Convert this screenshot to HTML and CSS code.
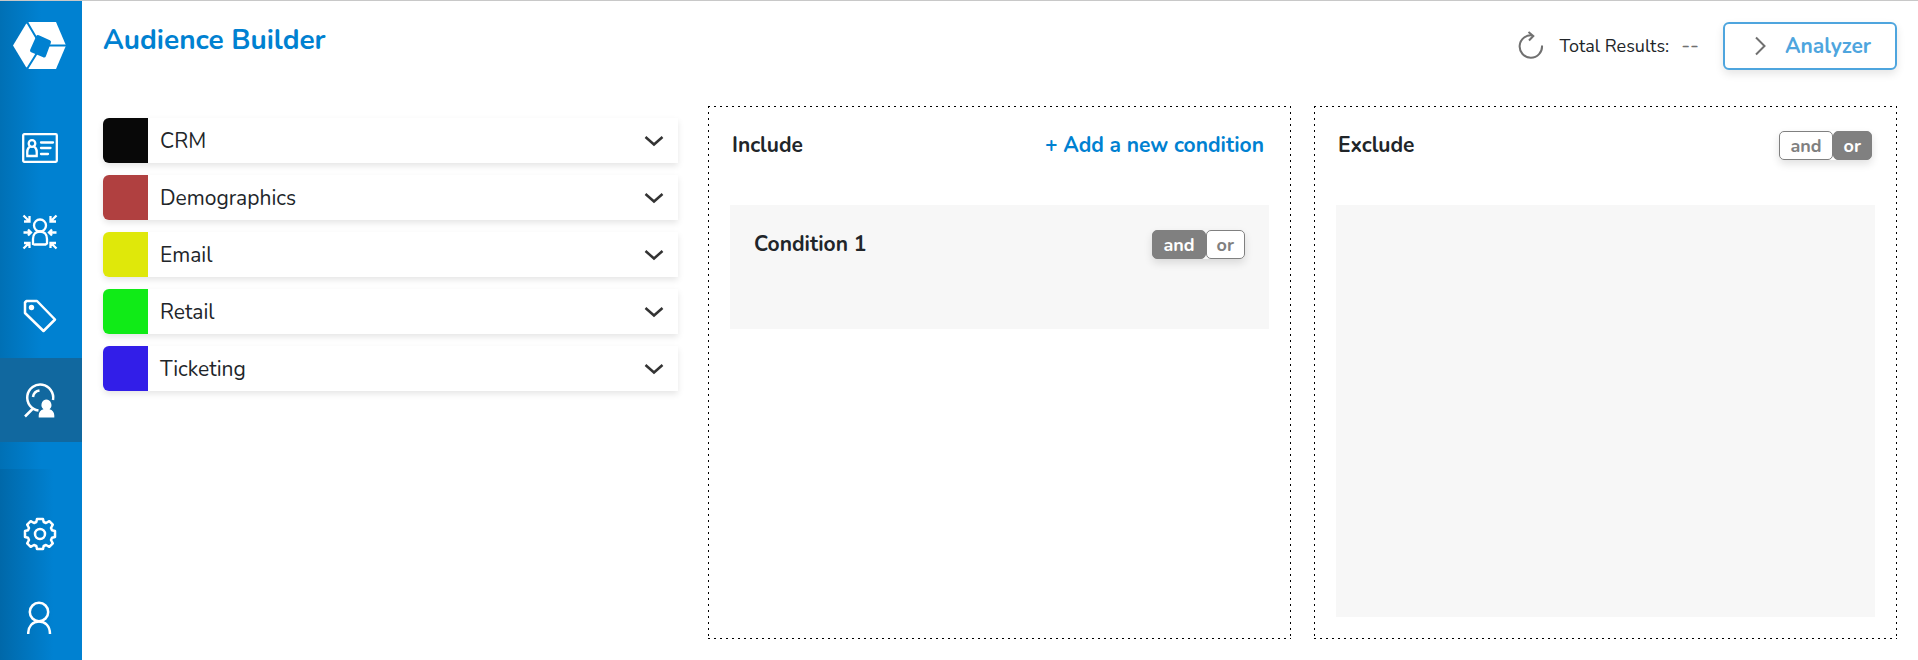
FILE: index.html
```
<!DOCTYPE html>
<html lang="en">
  <head>
    <meta charset="utf-8">
    <title>Audience Builder</title>
    <link rel="stylesheet" href="styles.css">
  </head>
  <body>
    <nav class="sidebar">
      <a class="logo" href="#" aria-label="Home">
        <svg width="54" height="50" viewBox="0 0 54 50">
          <path fill="#fff" d="M13 3l3-2h27l10 23.500L43 48H16l-3-2L0 24.500z"/>
          <path fill="none" stroke="#0081d1" stroke-width="2" d="M14 1l10 17M54 24.500H35M14 48l10-16"/>
          <path fill="#0081d1" stroke="#0081d1" stroke-width="4" stroke-linejoin="round" d="M25 16l11 5-5 13.500-12-5z"/>
        </svg>
      </a>
      <div class="nav-top">
        <a class="nav-item" href="#" aria-label="Contacts">
          <svg width="36" height="30" viewBox="0 0 36 30" fill="none" stroke="#fff" stroke-width="2.300" stroke-linecap="round">
            <rect x="1.200" y="1.200" width="33.600" height="27.600" rx="1"/>
            <circle cx="10" cy="10.500" r="3.300"/>
            <path d="M7.500 14C5 15.500 5 18 5.300 23h9.400c.3-5 .3-7.500-2.200-9M19 9.500h12M19 15h9.500M19 21h7"/>
          </svg>
        </a>
        <a class="nav-item" href="#" aria-label="Segments">
          <svg width="36" height="36" viewBox="0 0 36 36" fill="none" stroke="#fff" stroke-width="2.300">
            <circle cx="18" cy="11.500" r="6"/>
            <path d="M11 30v-5c0-5 3-7.500 7-7.500s7 2.500 7 7.500v4.500l-1.500 1h-11z"/>
            <path d="M1.500 18.500H9M6 15.500l3 3-3 3M34.500 18.500H27M30 15.500l-3 3 3 3M1.500 1.500L7 7M7.500 2v5.500H2M34.500 1.500L29 7M28.500 2v5.500H34M1.500 34.500L7 29M2 29h5.500v5M34.500 34.500L29 29M34 29h-5.500v5"/>
          </svg>
        </a>
        <a class="nav-item" href="#" aria-label="Tags">
          <svg width="34" height="34" viewBox="0 0 34 34" fill="none" stroke="#fff" stroke-width="2.500" stroke-linejoin="round">
            <path d="M2 3.500L3.500 2H14L32 20.500 20.500 32 2 14z"/>
            <circle cx="8.500" cy="8.500" r="2.700" fill="#fff" stroke="none"/>
          </svg>
        </a>
        <a class="nav-item active" href="#" aria-label="Audience Builder">
          <svg width="34" height="36" viewBox="0 0 34 36" fill="none" stroke="#fff" stroke-width="2.500">
            <path d="M15.500 28.500A13 13 0 1 1 30 18M10 15c.5-3.500 3-6 6.500-6.500M9.500 27L2 34.500"/>
            <path fill="#fff" stroke="none" d="M23 17.500a5.500 5.500 0 0 1 3.500 9.700c3 .8 4.800 3 4.800 6.300v2H15.700v-2c0-3.300 1.800-5.500 4.800-6.300A5.500 5.500 0 0 1 23 17.500z"/>
          </svg>
        </a>
      </div>
      <div class="nav-bottom">
        <a class="nav-item" href="#" aria-label="Settings">
          <svg width="34" height="34" viewBox="0 0 34 34" fill="none" stroke="#fff" stroke-width="2.500" stroke-linejoin="round">
            <path d="M13.300 5L14 2h6l.7 3 2.300 1 3.300-1.800 3.500 3.500L28 11l1 2.300 3 .7v6l-3 .7-1 2.300 1.800 3.300-3.500 3.500L23 28l-2.300 1-.7 3h-6l-.7-3-2.300-1-3.300 1.800-3.500-3.500L6 23l-1-2.300-3-.7v-6l3-.7L6 11 4.200 7.700l3.500-3.500L11 6z"/>
            <circle cx="17" cy="17" r="5"/>
          </svg>
        </a>
        <a class="nav-item" href="#" aria-label="Profile">
          <svg width="26" height="34" viewBox="0 0 26 34" fill="none" stroke="#fff" stroke-width="2.500">
            <circle cx="12" cy="11" r="9.200"/>
            <path d="M1.200 33c0-8 4.500-12.500 10.800-12.500S23 25 23 33"/>
          </svg>
        </a>
      </div>
    </nav>

    <main class="main">
      <header class="header">
        <h1 class="title">Audience Builder</h1>
        <div class="results">
          <button class="refresh" type="button" aria-label="Refresh">
            <svg width="26" height="30" viewBox="0 0 26 30" fill="none" stroke="#707070" stroke-width="2">
              <path d="M24 14.500a11.200 11.200 0 1 1-9-10M10.500 1l4.800 4-4.300 4.500"/>
            </svg>
          </button>
          <span class="total">Total Results:</span>
          <span class="count">--</span>
          <button class="analyzer" type="button">
            <svg width="12" height="20" viewBox="0 0 12 20" fill="none" stroke="#707070" stroke-width="2">
              <path d="M1 1.500L9.500 10 1 18.500"/>
            </svg>
            Analyzer
          </button>
        </div>
      </header>

      <div class="columns">
        <div class="categories">
          <button class="category" type="button">
            <span class="swatch crm"></span>
            <span class="name">CRM</span>
            <svg class="chevron" width="20" height="12" viewBox="0 0 20 12"><path d="M1.500 2l8.500 7.500L18.500 2"/></svg>
          </button>
          <button class="category" type="button">
            <span class="swatch demographics"></span>
            <span class="name">Demographics</span>
            <svg class="chevron" width="20" height="12" viewBox="0 0 20 12"><path d="M1.500 2l8.500 7.500L18.500 2"/></svg>
          </button>
          <button class="category" type="button">
            <span class="swatch email"></span>
            <span class="name">Email</span>
            <svg class="chevron" width="20" height="12" viewBox="0 0 20 12"><path d="M1.500 2l8.500 7.500L18.500 2"/></svg>
          </button>
          <button class="category" type="button">
            <span class="swatch retail"></span>
            <span class="name">Retail</span>
            <svg class="chevron" width="20" height="12" viewBox="0 0 20 12"><path d="M1.500 2l8.500 7.500L18.500 2"/></svg>
          </button>
          <button class="category" type="button">
            <span class="swatch ticketing"></span>
            <span class="name">Ticketing</span>
            <svg class="chevron" width="20" height="12" viewBox="0 0 20 12"><path d="M1.500 2l8.500 7.500L18.500 2"/></svg>
          </button>
        </div>

        <section class="panel">
          <div class="panel-header">
            <h2 class="heading">Include</h2>
            <button class="add" type="button">+ Add a new condition</button>
          </div>
          <div class="condition">
            <h3 class="heading">Condition 1</h3>
            <div class="toggle">
              <button class="option selected" type="button">and</button>
              <button class="option" type="button">or</button>
            </div>
          </div>
        </section>

        <section class="panel">
          <div class="panel-header">
            <h2 class="heading">Exclude</h2>
            <div class="toggle">
              <button class="option" type="button">and</button>
              <button class="option selected" type="button">or</button>
            </div>
          </div>
          <div class="dropzone"></div>
        </section>
      </div>
    </main>
  </body>
</html>
```
FILE: styles.css
```
* {
  box-sizing: border-box;
}
body {
  margin: 0;
  min-height: 100vh;
  display: flex;
  border-top: 1px solid #c8c8c8;
  font-family: Nunito, Lato, sans-serif;
  font-size: 21px;
  color: #212529;
}
button {
  font: inherit;
  color: inherit;
  background: none;
  border: 0;
  padding: 0;
  cursor: pointer;
}
svg {
  display: block;
}
h1, h2, h3 {
  margin: 0;
}

/* sidebar */
.sidebar {
  width: 82px;
  flex: none;
  display: flex;
  flex-direction: column;
  background: linear-gradient(to right, #0070b5, #0081d1 50%);
}
.logo {
  height: 105px;
  padding: 20px 0 0 13px;
}
.nav-item {
  height: 84px;
  display: flex;
  align-items: center;
  justify-content: center;
  padding-right: 2px;
}
.nav-item.active {
  background: #11689f;
}
.nav-bottom {
  margin-top: auto;
  padding-top: 23px;
  background: linear-gradient(to right, #0068a9, #0081d1 65%);
}

/* header */
.main {
  flex: 1;
  display: flex;
  flex-direction: column;
  padding: 21px 21px;
}
.header {
  display: flex;
  justify-content: space-between;
  margin-bottom: 36px;
}
.title {
  font-size: 28px;
  line-height: 36px;
  color: #0081d1;
}
.results {
  display: flex;
  align-items: center;
  font-size: 18px;
}
.total {
  margin: 0 12px 0 16px;
}
.count {
  margin-right: 24px;
  font-size: 21px;
  color: #707070;
}
.analyzer {
  height: 48px;
  width: 174px;
  display: flex;
  align-items: center;
  justify-content: flex-end;
  gap: 18px;
  padding-right: 24px;
  border: 2px solid #4ea5de;
  border-radius: 6px;
  box-shadow: 0 4px 8px rgba(0, 0, 0, .1);
  background: #fff;
  font-size: 21px;
  font-weight: bold;
  color: #4ea5de;
}

/* categories and the two panels */
.columns {
  flex: 1;
  display: grid;
  grid-template-columns: 582fr 583fr 583fr;
  gap: 23px;
}
.categories {
  display: flex;
  flex-direction: column;
  gap: 12px;
  padding: 12px 7px 0 0;
}
.category {
  height: 45px;
  display: flex;
  align-items: center;
  padding-right: 14px;
  border-radius: 6px 0 0 6px;
  box-shadow: 0 3px 6px rgba(0, 0, 0, .1);
  background: #fff;
}
.swatch {
  width: 45px;
  height: 45px;
  border-radius: 6px 0 0 6px;
}
.crm { background: #080808; }
.demographics { background: #b04040; }
.email { background: #dfe80a; }
.retail { background: #10eb17; }
.ticketing { background: #321ee8; }
.name {
  flex: 1;
  margin-left: 12px;
  text-align: left;
}
.chevron {
  fill: none;
  stroke: #333;
  stroke-width: 2.5;
}

/* panels, the dashed outline is drawn with four gradients */
.panel {
  display: flex;
  flex-direction: column;
  padding: 0 22px 22px;
  background:
    linear-gradient(to right, #000 2px, transparent 2px) left top / 6px 1px repeat-x,
    linear-gradient(to right, #000 2px, transparent 2px) left bottom / 6px 1px repeat-x,
    linear-gradient(to bottom, #000 2px, transparent 2px) left top / 1px 6px repeat-y,
    linear-gradient(to bottom, #000 2px, transparent 2px) right top / 1px 6px repeat-y;
}
.panel-header {
  height: 99px;
  display: flex;
  align-items: flex-start;
  justify-content: space-between;
  padding: 25px 3px 0 2px;
}
.heading {
  font-size: 21px;
  line-height: 28px;
}
.add {
  line-height: 28px;
  font-weight: bold;
  color: #0081d1;
  margin-right: 2px;
}
.condition {
  height: 124px;
  display: flex;
  align-items: flex-start;
  justify-content: space-between;
  padding: 25px 24px;
  background: #f7f7f7;
}
.dropzone {
  flex: 1;
  background: #f7f7f7;
}
.toggle {
  display: flex;
  border-radius: 5px;
  box-shadow: 0 4px 8px rgba(0, 0, 0, .12);
}
.option {
  height: 29px;
  padding: 0 10px;
  border: 1px solid #808080;
  border-radius: 5px;
  background: #fff;
  font-size: 18px;
  line-height: 24px;
  font-weight: bold;
  color: #808080;
}
.option.selected {
  background: #808080;
  color: #fff;
}
```
